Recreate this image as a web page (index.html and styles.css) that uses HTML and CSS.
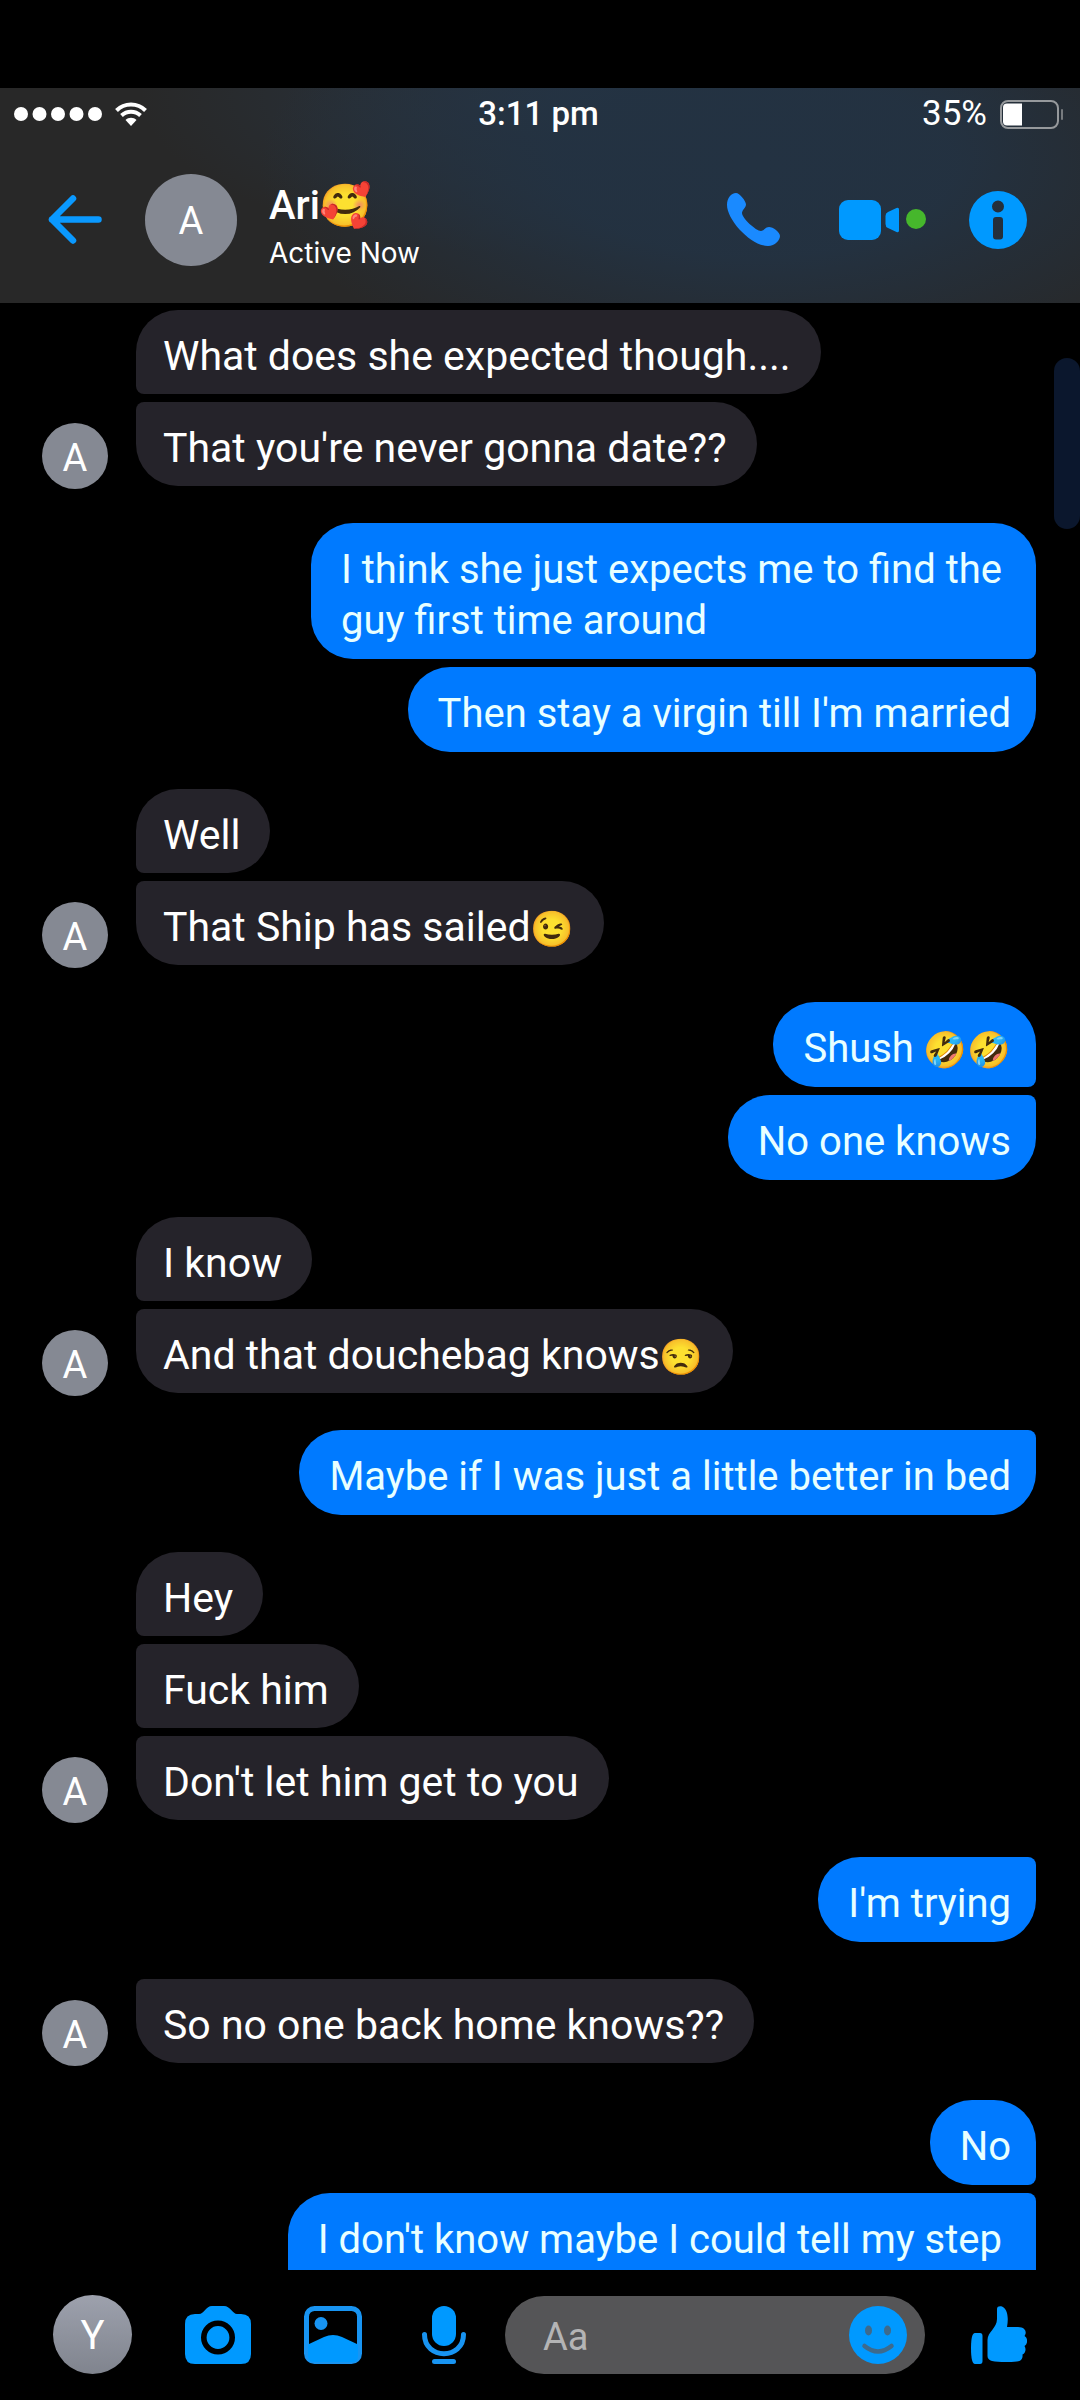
FILE: index.html
```
<!DOCTYPE html>
<html lang="en">
<head>
<meta charset="utf-8">
<meta name="viewport" content="width=device-width, initial-scale=1">
<title>Chat with Ari</title>
<link rel="stylesheet" href="styles.css">
</head>
<body>
<div class="app">
  <header class="header">
    <div class="status">
      <div class="status-left">
        <svg width="88" height="14" viewBox="0 0 88 14" fill="#fff" aria-hidden="true"><circle cx="7" cy="7" r="7"/><circle cx="25.500" cy="7" r="7"/><circle cx="44" cy="7" r="7"/><circle cx="62.500" cy="7" r="7"/><circle cx="81" cy="7" r="7"/></svg>
        <svg width="32" height="24" viewBox="0 0 32 24" aria-hidden="true"><path d="M1.500 8.500C9.500 .5 22.500 .5 30.500 8.500" fill="none" stroke="#fff" stroke-width="4"/><path d="M6.500 13.500C12 8.500 20 8.500 25.500 13.500" fill="none" stroke="#fff" stroke-width="4"/><path d="M10.500 18C13.500 15 18.500 15 21.500 18L16 24Z" fill="#fff"/></svg>
      </div>
      <time class="clock">3:11 pm</time>
      <div class="status-right">
        <span>35%</span>
        <svg width="63" height="29" viewBox="0 0 63 29" aria-hidden="true"><rect x="1" y="1" width="57" height="27" rx="7" fill="none" stroke="#96999c" stroke-width="2"/><path d="M7 3.500H22V25.500H7Q3 25.500 3 21.500V7.500Q3 3.500 7 3.500Z" fill="#fff"/><rect x="61" y="9" width="2" height="11" rx="1" fill="#777b7f"/></svg>
      </div>
    </div>
    <div class="bar">
      <button class="icon" aria-label="Back"><svg width="54" height="49" viewBox="0 0 54 49"><path d="M25 3.500L4 24.500L25 45.500M4 24.500H50.500" fill="none" stroke="#0a99ff" stroke-width="6.500" stroke-linecap="round" stroke-linejoin="round"/></svg></button>
      <span class="avatar avatar-lg">A</span>
      <div class="who">
        <h1 class="name">Ari<span class="emoji-lg">🥰</span></h1>
        <p class="presence">Active Now</p>
      </div>
      <div class="actions">
        <button class="icon call" aria-label="Call"><svg width="53" height="53" viewBox="0 0 53 53"><path fill="#1a8aff" d="M0 12C0 5 4 0 9 0C12.500 0 19 8 19 11.500C19 14.500 15 17 15 20C15 25 29 38 34 38C37 38 38 34 42 34C46 34 53 39 53 43C53 47 48 53 41 53C24 53 0 27 0 12Z"/></svg></button>
        <button class="icon" aria-label="Video call"><svg width="87" height="40" viewBox="0 0 87 40"><rect width="42" height="40" rx="9" fill="#09f"/><path fill="#09f" d="M46.500 16Q46.500 13 49 12L57.500 8Q60 7 60 9.500V30.500Q60 33 57.500 32L49 28Q46.500 27 46.500 24Z"/><circle cx="77" cy="19" r="10" fill="#46b72c"/></svg></button>
        <button class="icon" aria-label="Conversation info"><svg width="58" height="58" viewBox="0 0 58 58"><path fill="#09f" fill-rule="evenodd" d="M29 0A29 29 0 1 1 29 58A29 29 0 1 1 29 0ZM29 9.500A6 6 0 1 0 29 21.500A6 6 0 1 0 29 9.500ZM27 26Q24 26 24 29V45.500Q24 48.500 27 48.500H31Q34 48.500 34 45.500V29Q34 26 31 26Z"/></svg></button>
      </div>
    </div>
  </header>

  <main class="chat">
    <section class="group received">
      <span class="avatar">A</span>
      <div class="stack"><p class="bubble">What does she expected though....</p><p class="bubble">That you're never gonna date??</p></div>
    </section>
    <section class="group sent">
      <div class="stack"><p class="bubble wrapped">I think she just expects me to find the<br>guy first time around</p><p class="bubble">Then stay a virgin till I'm married</p></div>
    </section>
    <section class="group received">
      <span class="avatar">A</span>
      <div class="stack"><p class="bubble">Well</p><p class="bubble">That Ship has sailed<span class="emoji">😉</span></p></div>
    </section>
    <section class="group sent">
      <div class="stack"><p class="bubble">Shush <span class="emoji">🤣🤣</span></p><p class="bubble">No one knows</p></div>
    </section>
    <section class="group received">
      <span class="avatar">A</span>
      <div class="stack"><p class="bubble">I know</p><p class="bubble">And that douchebag knows<span class="emoji">😒</span></p></div>
    </section>
    <section class="group sent">
      <div class="stack"><p class="bubble">Maybe if I was just a little better in bed</p></div>
    </section>
    <section class="group received">
      <span class="avatar">A</span>
      <div class="stack"><p class="bubble">Hey</p><p class="bubble">Fuck him</p><p class="bubble">Don't let him get to you</p></div>
    </section>
    <section class="group sent">
      <div class="stack"><p class="bubble">I'm trying</p></div>
    </section>
    <section class="group received">
      <span class="avatar">A</span>
      <div class="stack"><p class="bubble">So no one back home knows??</p></div>
    </section>
    <section class="group sent">
      <div class="stack"><p class="bubble">No</p><p class="bubble wrapped">I don't know maybe I could tell my step</p></div>
    </section>
    <div class="scroll-thumb"></div>
  </main>

  <footer class="composer">
    <span class="avatar avatar-me">Y</span>
    <button class="icon" aria-label="Camera"><svg width="66" height="58" viewBox="0 0 66 58"><path fill="#09f" d="M10 8H14C19 8 21 0 27 0H39C45 0 48 8 52 8H56Q66 8 66 18V48Q66 58 56 58H10Q0 58 0 48V18Q0 8 10 8Z"/><circle cx="33" cy="31.500" r="14.200" fill="none" stroke="#000" stroke-width="5.600"/></svg></button>
    <button class="icon" aria-label="Photos"><svg width="58" height="58" viewBox="0 0 58 58"><rect x="2.500" y="2.500" width="53" height="53" rx="8" fill="none" stroke="#1894f2" stroke-width="5"/><circle cx="17" cy="17.500" r="6.500" fill="#1894f2"/><path fill="#09f" d="M4 38.500L20 31Q29 27 38 31L54 38.500V50Q54 56 48 56H10Q4 56 4 50Z"/></svg></button>
    <button class="icon" aria-label="Voice message"><svg width="58" height="58" viewBox="0 0 58 58"><rect x="17" width="24" height="40" rx="12" fill="#09f"/><path d="M9.500 28.500C9.500 54 48.500 54 48.500 28.500" fill="none" stroke="#1894f2" stroke-width="5" stroke-linecap="round"/><rect x="17" y="53" width="24" height="5" rx="2.500" fill="#1894f2"/></svg></button>
    <div class="field">
      <input class="input" type="text" placeholder="Aa" aria-label="Message">
      <button class="icon" aria-label="Emoji"><svg width="58" height="58" viewBox="0 0 58 58"><circle cx="29" cy="29" r="29" fill="#09f"/><ellipse cx="19.500" cy="24.500" rx="3.500" ry="5" fill="#3e6a8c"/><ellipse cx="38.500" cy="24.500" rx="3.500" ry="5" fill="#3e6a8c"/><path d="M15.500 40Q29 51 42.500 40" fill="none" stroke="#3e6a8c" stroke-width="4.500" stroke-linecap="round"/></svg></button>
    </div>
    <button class="icon like" aria-label="Like"><svg width="56" height="58" viewBox="0 0 56 58" fill="#09f"><path d="M4 27H9Q11.500 27 11.500 30V55Q11.500 58 9 58H4Q0 58 0 42Q0 27 4 27Z"/><path d="M26 3C26 0 29 0 31 .5C36 3 38 10 36 21H47C55 21 56 27 53.500 30C57 32 57 38 53.500 40C55.500 43 54.500 47 51.500 48.500C52 53 50 55 46 55.500C38 56.300 27 56.300 21 55Q16.500 53.500 16.500 50V34C16.500 26 26 22 26 13Z"/></svg></button>
  </footer>
</div>
</body>
</html>
```
FILE: styles.css
```
* { box-sizing: border-box; }

body, h1, p { margin: 0; }

body {
  background: #000;
  color: #fff;
  font-family: Roboto, "Noto Color Emoji", sans-serif;
  font-size: 41px;
}

.app {
  display: flex;
  flex-direction: column;
  height: 100vh;
  padding-top: 88px;
}

.icon {
  display: block;
  padding: 0;
  border: 0;
  background: none;
  flex: none;
}

.icon svg { display: block; }

.avatar {
  display: flex;
  align-items: center;
  justify-content: center;
  flex: none;
  width: 66px;
  height: 66px;
  padding-top: 3px;
  border-radius: 50%;
  background: #858993;
  font-size: 38px;
  line-height: 44px;
}

/* Header */

.header {
  flex: none;
  background:
    radial-gradient(ellipse 46% 105% at 70% 36%, #233242 0%, #233242ee 40%, #23324200 100%),
    radial-gradient(ellipse 42% 75% at 55% 4%, #283645 0%, #28364500 100%),
    #282828;
}

.status {
  display: grid;
  grid-template-columns: 1fr auto 1fr;
  align-items: center;
  height: 52px;
  padding: 0 17px 0 14px;
  font-size: 35px;
  line-height: 40px;
}

.status-left, .status-right {
  display: flex;
  align-items: center;
  gap: 13px;
}

.status-right { justify-content: flex-end; }

.clock {
  font-size: 33px;
  font-weight: 500;
}

.bar {
  display: flex;
  align-items: center;
  padding: 28px 53px 32px 48px;
}

.avatar-lg {
  width: 92px;
  height: 92px;
  margin-left: 43px;
}

.who {
  flex: 1;
  margin-left: 32px;
  padding-top: 12px;
}

.name {
  display: flex;
  font-size: 40px;
  font-weight: 500;
  line-height: 52px;
}

.presence {
  margin-top: 3px;
  font-family: Inter, sans-serif;
  font-size: 28px;
  line-height: 36px;
}

.actions {
  display: flex;
  align-items: center;
  gap: 43px;
}

.call { margin-right: 16px; }

/* Conversation */

.chat {
  position: relative;
  display: flex;
  flex: 1;
  flex-direction: column;
  gap: 37px;
  min-height: 0;
  overflow: hidden;
  padding: 7px 44px 0 42px;
}

.group {
  display: flex;
  flex: none;
  align-items: flex-end;
  gap: 28px;
}

.group > .avatar { margin-bottom: -3px; }

.stack {
  display: flex;
  flex-direction: column;
  align-items: flex-start;
  gap: 8px;
}

.sent { justify-content: flex-end; }
.sent .stack { align-items: flex-end; }

.bubble {
  padding: 21px 30px 12px 27px;
  border-radius: 42px;
  background: #25232a;
  line-height: 51px;
}

.sent .bubble {
  padding: 21px 25px 13px 30px;
  background: #007aff;
  color: #e8ffff;
  font-size: 40px;
}

/* The corners on the speaker's side are tight; the ends of a run stay round. */
.received .bubble { border-top-left-radius: 8px; border-bottom-left-radius: 8px; }
.received .bubble:first-child:not(:last-child) { border-top-left-radius: 42px; }
.received .bubble:last-child { border-bottom-left-radius: 42px; }
.sent .bubble { border-top-right-radius: 8px; border-bottom-right-radius: 8px; }
.sent .bubble:first-child:not(:last-child) { border-top-right-radius: 42px; }
.sent .bubble:last-child { border-bottom-right-radius: 42px; }

.sent .wrapped {
  min-height: 136px;
  padding-right: 34px;
}

.emoji {
  font-size: 35px;
  line-height: 40px;
}

.emoji-lg { font-size: 42px; }

.scroll-thumb {
  position: absolute;
  top: 55px;
  right: 0;
  width: 26px;
  height: 171px;
  border-radius: 13px;
  background: #0b172d;
}

/* Composer */

.composer {
  display: flex;
  flex: none;
  align-items: center;
  gap: 53px;
  padding: 25px 53px 26px;
}

.avatar-me {
  width: 79px;
  height: 79px;
  background: linear-gradient(#9da1ad, #80848e);
  font-size: 40px;
}

.field {
  display: flex;
  flex: 1;
  align-items: center;
  min-width: 0;
  height: 78px;
  margin: 0 -7px 0 -21px;
  padding: 0 18px 0 38px;
  border-radius: 39px;
  background: #555557;
}

.input {
  flex: 1;
  min-width: 0;
  padding: 4px 0 0;
  border: 0;
  outline: 0;
  background: none;
  color: #fff;
  font-family: inherit;
  font-size: 38px;
}

.input::placeholder {
  color: #b4b4b5;
  opacity: 1;
}
```
